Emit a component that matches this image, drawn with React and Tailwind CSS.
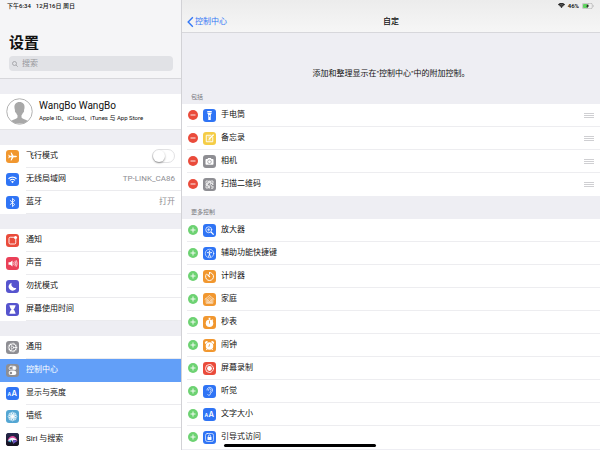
import { useState } from 'react'

const stroke = {
  fill: 'none',
  stroke: 'currentColor',
  strokeLinecap: 'round',
  strokeLinejoin: 'round',
}

// All glyphs are drawn on a 26x26 grid, two units per pixel
const glyphs = {
  airplane: (
    <path fill="currentColor" d="M22 13c0-1-1.600-1.600-3-1.600h-4L11 5H9.200l2 6.400H7.600L6 9.400H4.600L5.600 13l-1 3.600H6l1.600-2h3.600l-2 6.400H11l4-6.400h4c1.400 0 3-.6 3-1.600z" />
  ),
  wifi: (
    <g {...stroke} strokeWidth="2.200" strokeLinecap="butt">
      <path d="M5 11.500a11.500 11.500 0 0 1 16 0M8 14.800a7.400 7.400 0 0 1 10 0" />
      <path fill="currentColor" stroke="none" d="M10 17.200a4.600 4.600 0 0 1 6 0l-3 3.300z" />
    </g>
  ),
  bluetooth: <path {...stroke} strokeWidth="1.700" d="M8.500 9l9 8-4.500 4.200V4.800L17.500 9l-9 8" />,
  notice: (
    <g>
      <path {...stroke} strokeWidth="1.800" d="M15.500 6.500H8.500a2.500 2.500 0 0 0-2.500 2.500v8.500A2.500 2.500 0 0 0 8.500 20H17a2.500 2.500 0 0 0 2.500-2.500v-7" />
      <circle cx="19" cy="7" r="3.200" fill="currentColor" />
    </g>
  ),
  sound: (
    <g>
      <path fill="currentColor" d="M5 10.500h3.500L13 7v12l-4.500-3.500H5z" />
      <path {...stroke} strokeWidth="1.500" d="M15.500 10.500c1 1.500 1 3.500 0 5M18 8.500c2 2.700 2 6.300 0 9M20.500 7c2.400 3.800 2.400 8.200 0 12" />
    </g>
  ),
  moon: <path fill="currentColor" d="M11.500 5.500a8 8 0 1 0 9.300 10.300A7.600 7.600 0 0 1 11.500 5.500z" />,
  hourglass: (
    <path fill="currentColor" d="M7 4.500h12v2.300h-1c0 3-1.300 4.700-3.300 6.200 2 1.500 3.300 3.200 3.300 6.200h1v2.300H7v-2.300h1c0-3 1.300-4.700 3.300-6.200C9.300 11.500 8 9.800 8 6.800H7z" />
  ),
  gear: (
    <g {...stroke}>
      <circle cx="13" cy="13" r="7.300" strokeWidth="2" />
      <circle cx="13" cy="13" r="9" strokeWidth="1.400" strokeDasharray="1.400 1.430" strokeLinecap="butt" />
      <circle cx="13" cy="13" r="2.600" strokeWidth="1.400" />
      <path strokeWidth="1.300" d="M15.600 13H20M11.700 10.700L9.500 7M11.700 15.300L9.500 19" />
    </g>
  ),
  toggles: (
    <g>
      <rect x="6" y="4.500" width="14" height="7.400" rx="3.700" {...stroke} strokeWidth="1.500" />
      <circle cx="16.200" cy="8.200" r="3.500" fill="currentColor" />
      <rect x="5.300" y="13.600" width="15.400" height="8.600" rx="4.300" fill="currentColor" />
      <circle cx="9.800" cy="17.900" r="2.600" fill="#8e8e93" />
    </g>
  ),
  letters: (
    <g fill="currentColor" fontFamily="Inter, sans-serif" fontWeight="600">
      <text x="3" y="18" fontSize="10">A</text>
      <text x="11" y="18" fontSize="15">A</text>
    </g>
  ),
  flower: (
    <g {...stroke} strokeWidth="1.200">
      {[0, 45, 90, 135, 180, 225, 270, 315].map((angle) => (
        <ellipse key={angle} cx="13" cy="8.200" rx="2.800" ry="4" transform={`rotate(${angle} 13 13)`} fill="#c5e7f5" fillOpacity=".35" />
      ))}
      <circle cx="13" cy="13" r="2" fill="currentColor" />
    </g>
  ),
  siri: (
    <g>
      <defs>
        <linearGradient id="siri-bg" x1="0" y1="0" x2="0" y2="1">
          <stop offset="0" stopColor="#262a50" />
          <stop offset="1" stopColor="#15101d" />
        </linearGradient>
      </defs>
      <rect width="26" height="26" fill="url(#siri-bg)" />
      <path fill="#d64b9b" d="M3 16C5 8 10 5 15 6c4 1 7 5 8 10-4-3-7-4-10-2-3-1-6-1-10 2z" />
      <path fill="#43b7dc" d="M4 17c3-5 6-7 10-7-3 2-4 6-4 9-2-2-4-2-6-2z" />
      <path fill="#f2f6ff" d="M4 16c4-8 13-9 18-1-4-2-6-1-8 0l1 7-3-7c-2-1-5-1-8 1z" />
      <path fill="#6c52c9" d="M14 15c4-2 6 0 8 3-3 0-5 1-7 4z" />
    </g>
  ),
  torch: (
    <g fill="currentColor">
      <path d="M8.500 4h9v2.400h-9zM8.500 7.400h9c0 2.300-2 3-2 5V22h-5v-9.600c0-2-2-2.700-2-5z" />
      <rect x="12.300" y="12" width="1.500" height="3.800" rx=".7" fill="#2f74f5" />
    </g>
  ),
  note: (
    <g {...stroke} strokeWidth="1.900">
      <path d="M16 6.500H6.500v13h13V11" />
      <path d="M10 10h4M10 16h6" strokeWidth="1.200" />
      <path strokeWidth="2.600" d="M12.500 14L20.500 6" />
    </g>
  ),
  camera: (
    <g>
      <path fill="currentColor" d="M5 9.500C5 8.600 5.600 8 6.500 8H9l1.300-2h5.400L17 8h2.500c.9 0 1.500.6 1.500 1.500v8.500c0 .9-.6 1.500-1.500 1.500h-13C5.600 19.500 5 18.900 5 18z" />
      <circle cx="13" cy="13.500" r="3.600" fill="none" stroke="#8e8e93" strokeWidth="1.300" />
    </g>
  ),
  qr: (
    <g {...stroke} strokeWidth="1.500" strokeLinecap="butt">
      <path d="M6 6h5v5H6zM15 6h5v5h-5zM6 15h5v5H6z" />
      <path d="M13 5v5M13 12.500h3M18 13h3M5 13h5M13 15v6M15 15.500h3v3M20 16v4.500h-4" />
      <path fill="currentColor" stroke="none" d="M8 8h1.500v1.500H8zM16.800 8h1.500v1.500h-1.500zM8 17h1.500v1.500H8z" />
    </g>
  ),
  magnifier: (
    <g {...stroke} strokeWidth="1.500">
      <circle cx="11.500" cy="11.500" r="6" />
      <path strokeWidth="2.400" d="M16.300 16.300L20.500 20.500" />
      <path d="M11.500 9v5M9 11.500h5" />
    </g>
  ),
  accessibility: (
    <g {...stroke} strokeWidth="1.300">
      <circle cx="13" cy="13" r="8.500" />
      <circle cx="13" cy="8.300" r="1.500" fill="currentColor" stroke="none" />
      <path strokeWidth="1.800" d="M8.800 11.200l4.200.6 4.200-.6M13 11.800v3M11.200 19l1.800-4.500 1.800 4.500" />
    </g>
  ),
  timer: (
    <g {...stroke} strokeWidth="1.900">
      <path d="M13 5a8 8 0 1 1-6.400 3.200M13 5v3.600" />
      <path strokeWidth="2.300" d="M9.500 9.500l3.700 4" />
    </g>
  ),
  home: (
    <g {...stroke} strokeWidth="1.200">
      <path d="M4 12.500L13 5l9 7.500M6.300 11.500V20.500h13.400V11.500" />
      <path d="M8.700 18.300v-6L13 8.700l4.300 3.600v6z" />
      <path d="M11.200 16.200v-2.700L13 12l1.800 1.500v2.700z" />
    </g>
  ),
  stopwatch: (
    <g>
      <circle cx="13" cy="14.500" r="7.500" fill="currentColor" />
      <path fill="currentColor" d="M11 3.500h4v2.200h-1v2h-2v-2h-1zM18.700 6.500l2 2-1.500 1.300-1.800-1.800z" />
      <path d="M13 10v4.500" stroke="#f1972f" strokeWidth="1.600" strokeLinecap="round" />
    </g>
  ),
  alarm: (
    <g>
      <circle cx="13" cy="14" r="7.500" fill="currentColor" />
      <path fill="currentColor" d="M4.500 10A3.300 3.300 0 0 1 10 5.800zM21.500 10A3.300 3.300 0 0 0 16 5.800z" />
      <path {...stroke} strokeWidth="2" d="M8.500 19.500L7 21.500M17.500 19.500l1.500 2" />
      <path d="M13 10v4.300h-3" fill="none" stroke="#f1972f" strokeWidth="1.200" />
    </g>
  ),
  record: (
    <g>
      <circle cx="13" cy="13" r="8" {...stroke} strokeWidth="1.700" />
      <circle cx="13" cy="13" r="4.800" fill="currentColor" />
    </g>
  ),
  ear: (
    <g {...stroke} strokeWidth="1.500">
      <path d="M8 10c0-3 2.500-5.200 5.500-5.200S19 7 19 10c0 4.500-4 5.500-4.600 8.700-.4 2-3.600 3-4.900.8" />
      <path d="M10.800 10.500c0-1.800 1.200-3 2.700-3s2.700 1.200 2.700 2.800c0 2.200-2.700 2.700-2.200 4.700" />
    </g>
  ),
  guided: (
    <g>
      <rect x="5" y="5" width="16" height="16" rx="3.500" {...stroke} strokeWidth="1.300" />
      <rect x="9" y="12" width="8" height="6" rx="1" fill="currentColor" />
      <path {...stroke} strokeWidth="1.500" d="M10.700 12v-1.700a2.300 2.300 0 0 1 4.600 0V12" />
    </g>
  ),
}

const Tile = ({ icon, color }) => (
  <span className={`size-[13px] shrink-0 overflow-hidden rounded-[3px] text-white ${color}`}>
    <svg viewBox="0 0 26 26" className="block size-full" aria-hidden="true">
      {glyphs[icon]}
    </svg>
  </span>
)

const connections = [
  { icon: 'airplane', color: 'bg-[#f1972f]', label: '飞行模式', toggle: true },
  { icon: 'wifi', color: 'bg-[#2f74f5]', label: '无线局域网', value: 'TP-LINK_CA86' },
  { icon: 'bluetooth', color: 'bg-[#2f74f5]', label: '蓝牙', value: '打开' },
]

const alerts = [
  { icon: 'notice', color: 'bg-[#ea4b3b]', label: '通知' },
  { icon: 'sound', color: 'bg-[#ea4058]', label: '声音' },
  { icon: 'moon', color: 'bg-[#5654ce]', label: '勿扰模式' },
  { icon: 'hourglass', color: 'bg-[#5654ce]', label: '屏幕使用时间' },
]

const general = [
  { icon: 'gear', color: 'bg-[#8e8e93]', label: '通用' },
  { icon: 'toggles', color: 'bg-[#8e8e93]', label: '控制中心', active: true },
  { icon: 'letters', color: 'bg-[#2f74f5]', label: '显示与亮度' },
  { icon: 'flower', color: 'bg-[#53a6d3]', label: '墙纸' },
  { icon: 'siri', color: 'bg-[#15101d]', label: 'Siri 与搜索' },
]

const included = [
  { icon: 'torch', color: 'bg-[#2f74f5]', label: '手电筒' },
  { icon: 'note', color: 'bg-[#f5cd46]', label: '备忘录' },
  { icon: 'camera', color: 'bg-[#8e8e93]', label: '相机' },
  { icon: 'qr', color: 'bg-[#8e8e93]', label: '扫描二维码' },
]

const more = [
  { icon: 'magnifier', color: 'bg-[#2f74f5]', label: '放大器' },
  { icon: 'accessibility', color: 'bg-[#2f74f5]', label: '辅助功能快捷键' },
  { icon: 'timer', color: 'bg-[#f1972f]', label: '计时器' },
  { icon: 'home', color: 'bg-[#f1972f]', label: '家庭' },
  { icon: 'stopwatch', color: 'bg-[#f1972f]', label: '秒表' },
  { icon: 'alarm', color: 'bg-[#f1972f]', label: '闹钟' },
  { icon: 'record', color: 'bg-[#ea4b3b]', label: '屏幕录制' },
  { icon: 'ear', color: 'bg-[#2f74f5]', label: '听觉' },
  { icon: 'letters', color: 'bg-[#2f74f5]', label: '文字大小' },
  { icon: 'guided', color: 'bg-[#2f74f5]', label: '引导式访问' },
]

const SettingRow = ({ item }) => {
  const [on, setOn] = useState(false)
  const row = `flex h-[23px] items-center gap-[7px] pl-1.5 ${item.active ? 'bg-[#629ff8] text-white' : 'bg-white'}`
  const body = `flex h-full flex-1 items-center justify-between border-b pr-1.5 ${item.active ? 'border-[#629ff8]' : 'border-[#ebebee]'}`

  if (item.toggle) {
    return (
      <label className={row}>
        <Tile icon={item.icon} color={item.color} />
        <span className={body}>
          {item.label}
          <input
            type="checkbox"
            role="switch"
            checked={on}
            onChange={() => setOn(!on)}
            className="flex h-[14px] w-[23px] appearance-none items-center rounded-full border border-[#e2e2e4] bg-white before:size-3 before:rounded-full before:bg-white before:shadow-[0_1px_2px_rgba(0,0,0,0.4)] checked:justify-end checked:bg-[#65d36e]"
          />
        </span>
      </label>
    )
  }

  return (
    <a href="#" className={row} aria-current={item.active ? 'page' : undefined}>
      <Tile icon={item.icon} color={item.color} />
      <span className={body}>
        {item.label}
        {item.value && <span className="text-[#8e8e93]">{item.value}</span>}
      </span>
    </a>
  )
}

const SettingGroup = ({ items }) => (
  <div>
    {items.map((item) => (
      <SettingRow key={item.label} item={item} />
    ))}
  </div>
)

const ControlRow = ({ item, removable }) => (
  <li className="ml-[5px] flex h-[23px] items-center border-b border-[#ededf0] pr-1.5 pl-px last:border-transparent">
    <button
      type="button"
      aria-label={`${removable ? '移除' : '添加'}${item.label}`}
      className={`mr-[5px] size-[10px] shrink-0 rounded-full text-white ${removable ? 'bg-[#ea4b3b]' : 'bg-[#6dd272]'}`}
    >
      <svg viewBox="0 0 10 10" className="block size-full" aria-hidden="true">
        <path d={removable ? 'M2.500 5h5' : 'M2.500 5h5M5 2.500v5'} stroke="currentColor" strokeWidth=".9" />
      </svg>
    </button>
    <Tile icon={item.icon} color={item.color} />
    <span className="ml-[5px] flex-1">{item.label}</span>
    {removable && (
      <span className="flex w-[10px] flex-col gap-px" aria-hidden="true">
        <span className="h-px bg-[#cfcfd2]" />
        <span className="h-px bg-[#cfcfd2]" />
        <span className="h-px bg-[#cfcfd2]" />
      </span>
    )}
  </li>
)

const StatusIcons = () => (
  <div className="flex h-[11px] items-center justify-end gap-[3px] pr-1.5 text-[6px] font-semibold">
    <svg viewBox="0 0 14 10" className="h-[5px] w-[7px]" aria-hidden="true">
      <path fill="currentColor" d="M7 10L0 3a10 10 0 0 1 14 0z" />
      <path fill="none" stroke="#efefef" strokeWidth=".8" d="M2 5a7 7 0 0 1 10 0M4 7.200a4.300 4.300 0 0 1 6 0" />
    </svg>
    <span>46%</span>
    <svg viewBox="0 0 24 12" className="h-[6px] w-3" aria-hidden="true">
      <rect x=".6" y=".6" width="20" height="10.800" rx="3" fill="none" stroke="#a5a5a5" strokeWidth="1.200" />
      <rect x="2" y="2" width="9" height="8" rx="1.500" fill="#5fd35f" />
      <path fill="currentColor" d="M13 1L8 6.800h3L9.500 11l5-5.800h-3z" />
      <path fill="#a5a5a5" d="M22 4c1.500.6 1.500 3.400 0 4z" />
    </svg>
  </div>
)

const Sidebar = () => (
  <aside className="flex w-[182px] shrink-0 flex-col border-r border-[#d2d2d6]">
    <header className="border-b border-[#d7d7db] bg-[#f5f5f7] pb-[7px]">
      <div className="flex h-[11px] items-center gap-[5px] pl-[7px] text-[6px] font-medium">
        <span>下午6:34</span>
        <span>12月16日 周日</span>
      </div>
      <h1 className="mt-[21px] pl-[9px] text-[15px] leading-[22px] font-bold">设置</h1>
      <label className="mr-2 ml-[9px] mt-0.5 flex h-[15px] items-center gap-1 rounded-[4px] bg-[#e1e2e6] px-[3px] text-[#8e8e93]">
        <svg viewBox="0 0 12 12" className="size-1.5 shrink-0" aria-hidden="true">
          <circle cx="5" cy="5" r="4" fill="none" stroke="currentColor" strokeWidth="1.300" />
          <path d="M8 8l3.500 3.500" stroke="currentColor" strokeWidth="1.300" />
        </svg>
        <input
          type="search"
          aria-label="搜索"
          placeholder="搜索"
          className="w-full min-w-0 bg-transparent outline-none placeholder:text-[#98989d]"
        />
      </label>
    </header>

    <nav className="mt-[15px] flex flex-col gap-[15px]">
      <a href="#" className="flex h-9 items-center gap-1.5 border-b border-[#e4e4e7] bg-white pl-1.5">
        <svg viewBox="0 0 54 54" className="size-[27px]" aria-hidden="true">
          <circle cx="27" cy="27" r="25.500" fill="#fff" stroke="#a9a9a9" strokeWidth="1.800" />
          <path
            fill="#a8a8a8"
            d="M27 8c-7 0-11 5-10 12 .2 2 .6 3 1 4-.8 3 .8 5 2.300 6 .6 2 1.500 3.500 2.700 4.700V39c-2 3-8.500 3.500-13 7A25 25 0 0 0 27 51a25 25 0 0 0 17-5c-4.500-3.500-11-4-13-7v-4.300c1.200-1.200 2.100-2.700 2.700-4.700 1.500-1 3.100-3 2.300-6 .4-1 .8-2 1-4 1-7-3-12-10-12z"
          />
        </svg>
        <span className="flex flex-col">
          <span className="text-[10px] leading-3">WangBo WangBo</span>
          <span className="text-[6px] leading-3">Apple ID、iCloud、iTunes 与 App Store</span>
        </span>
      </a>
      <SettingGroup items={connections} />
      <SettingGroup items={alerts} />
      <SettingGroup items={general} />
    </nav>
  </aside>
)

const Controls = () => (
  <main className="min-w-0 flex-1">
    <header className="border-b border-[#d7d7db] bg-linear-to-b from-[#ececec] to-[#f6f6f6]">
      <StatusIcons />
      <div className="grid h-[21px] grid-cols-3 items-center">
        <a href="#" className="flex items-center gap-px pl-[5px] text-[#3478f6]">
          <svg viewBox="0 0 12 18" className="h-3 w-[7px]" aria-hidden="true">
            <path d="M10 1L2 9l8 8" fill="none" stroke="currentColor" strokeWidth="2.400" />
          </svg>
          控制中心
        </a>
        <h2 className="text-center font-medium">自定</h2>
      </div>
    </header>

    <p className="mt-9 text-center">添加和整理显示在"控制中心"中的附加控制。</p>

    <h3 className="mt-[11px] pl-[9px] text-[6px] leading-[14px] text-[#77777c]">包括</h3>
    <ul className="bg-white">
      {included.map((item) => (
        <ControlRow key={item.label} item={item} removable />
      ))}
    </ul>

    <h3 className="mt-[9px] pl-[9px] text-[6px] leading-[14px] text-[#77777c]">更多控制</h3>
    <ul className="bg-white">
      {more.map((item) => (
        <ControlRow key={item.label} item={item} />
      ))}
    </ul>
  </main>
)

export default function App() {
  return (
    <div
      lang="zh-CN"
      className="relative flex h-screen overflow-hidden bg-[#eeeef3] font-[Roboto,'Noto_Sans_CJK_SC',sans-serif] text-[8px] leading-[10px] text-[#111]"
    >
      <Sidebar />
      <Controls />
      <div className="absolute bottom-[3px] left-1/2 h-[3px] w-[152px] -translate-x-1/2 rounded-full bg-black" />
    </div>
  )
}
